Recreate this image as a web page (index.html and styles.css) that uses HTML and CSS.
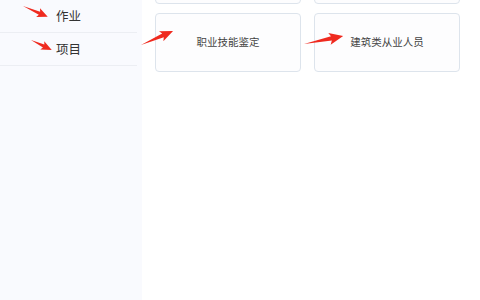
FILE: index.html
```html
<!DOCTYPE html>
<html lang="zh">
<head>
<meta charset="utf-8">
<link rel="stylesheet" href="styles.css">
</head>
<body>
<div class="page">
  <aside class="sidebar">
    <div class="menu">
      <div class="item">作业</div>
      <div class="item">项目</div>
    </div>
  </aside>
  <main class="main">
    <div class="grid">
      <div class="card"></div>
      <div class="card"></div>
      <div class="card">职业技能鉴定</div>
      <div class="card">建筑类从业人员</div>
    </div>
  </main>
  <svg class="marks" width="480" height="300" viewBox="0 0 480 300">
    <g fill="#ef2a1f">
      <polygon transform="translate(23 6) rotate(23.7)" points="0,0 18,-1.6 16.5,-4.8 27,0 16.5,4.8 18,1.6"/>
      <polygon transform="translate(31 40) rotate(25.5)" points="0,0 14,-1.6 12.5,-4.6 23,0 12.5,4.6 14,1.6"/>
      <polygon transform="translate(141 45) rotate(-23.6)" points="0,0 24,-2 22,-5.5 35,0 22,5.5 24,2"/>
      <polygon transform="translate(304 44) rotate(-11.6)" points="0,0 28,-2.2 26,-6 40,0 26,6 28,2.2"/>
    </g>
  </svg>
</div>
</body>
</html>
```
FILE: styles.css
```css
html, body {
  margin: 0;
  padding: 0;
  background: #ffffff;
  overflow: hidden;
}
.page {
  position: relative;
  display: flex;
  width: 480px;
  height: 300px;
  font-family: "Noto Sans CJK SC", "Noto Sans", sans-serif;
}
.sidebar {
  width: 142px;
  flex: none;
  background: #f9fafe;
}
.menu {
  width: 137px;
}
.item {
  height: 32px;
  line-height: 32px;
  border-bottom: 1px solid #eceef3;
  padding-left: 56px;
  font-size: 12.5px;
  color: #333333;
}
.main {
  flex: 1;
  padding-left: 13px;
}
.grid {
  display: grid;
  grid-template-columns: 146px 146px;
  grid-auto-rows: 59px;
  column-gap: 13px;
  row-gap: 9px;
  margin-top: -55px;
}
.card {
  box-sizing: border-box;
  border: 1px solid #dde4ec;
  border-radius: 4px;
  background: #fdfdfe;
  display: flex;
  align-items: center;
  justify-content: center;
  font-size: 10.5px;
  color: #444444;
  padding-bottom: 2px;
}
.marks {
  position: absolute;
  left: 0;
  top: 0;
  pointer-events: none;
}
```
